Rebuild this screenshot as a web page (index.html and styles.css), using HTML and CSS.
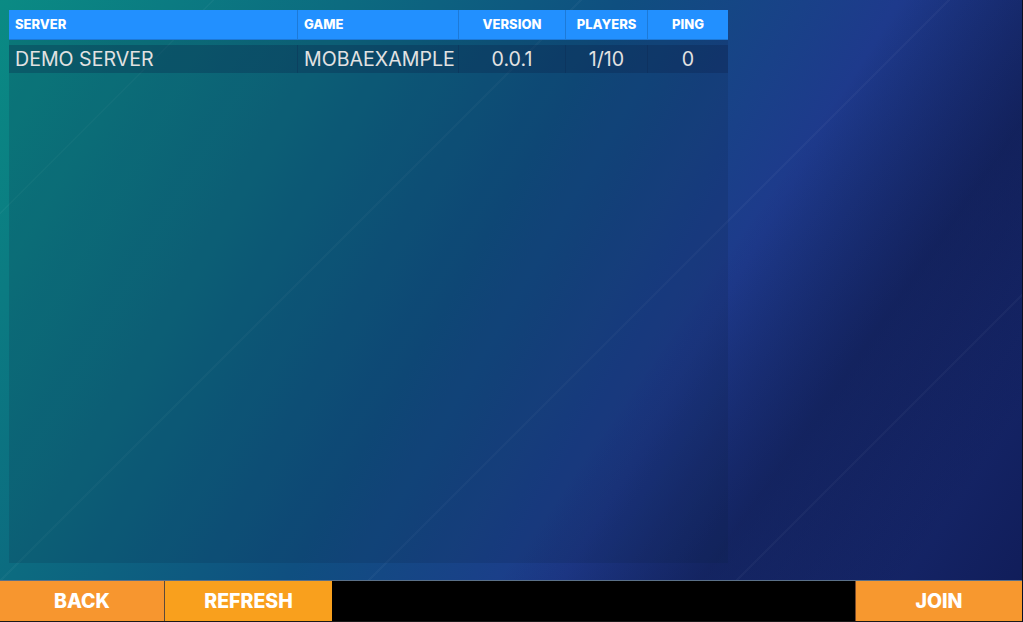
FILE: index.html
```html
<!DOCTYPE html>
<html>
<head>
<meta charset="utf-8">
<link rel="stylesheet" href="styles.css">
</head>
<body>
<div class="screen">
  <div class="main">
    <div class="panel">
      <div class="row head">
        <div class="cell c-server">SERVER</div>
        <div class="cell c-game">GAME</div>
        <div class="cell c-version center">VERSION</div>
        <div class="cell c-players center">PLAYERS</div>
        <div class="cell c-ping center">PING</div>
      </div>
      <div class="row item">
        <div class="cell c-server">DEMO SERVER</div>
        <div class="cell c-game">MOBAEXAMPLE</div>
        <div class="cell c-version center">0.0.1</div>
        <div class="cell c-players center">1/10</div>
        <div class="cell c-ping center">0</div>
      </div>
    </div>
  </div>
  <div class="bar">
    <button class="btn back">BACK</button>
    <button class="btn refresh">REFRESH</button>
    <div class="spacer"></div>
    <button class="btn join">JOIN</button>
  </div>
</div>
</body>
</html>
```
FILE: styles.css
```css
* { box-sizing: border-box; }
html, body { margin: 0; padding: 0; }
body {
  width: 1023px;
  height: 622px;
  overflow: hidden;
  font-family: "Inter", "Liberation Sans", sans-serif;
}
.screen {
  width: 1023px;
  height: 622px;
  display: flex;
  flex-direction: column;
  background:
    repeating-linear-gradient(135deg, rgba(255,255,255,0) 0 150px, rgba(255,255,255,0.03) 150px 152px, rgba(255,255,255,0) 152px 260px),
    linear-gradient(125deg, rgba(0,0,0,0) 0%, rgba(0,0,0,0) 62%, rgba(8,14,50,0.35) 76%, rgba(0,0,0,0) 90%),
    linear-gradient(120deg, #0a8b84 0%, #0c6b80 25%, #0f4f80 45%, #1e3a8c 65%, #17296e 82%, #101c58 100%);
  border-right: 1px solid #0a0f22;
}
.main {
  flex: 1;
  padding: 10px 0 0 9px;
}
.panel {
  width: 719px;
  height: 553px;
  background: rgba(10, 30, 60, 0.16);
}
.row {
  display: flex;
}
.head {
  height: 30px;
  background: #2290ff;
  border-bottom: 1px solid #1d78d6;
}
.head .cell {
  color: #ffffff;
  font-weight: 800;
  font-size: 13px;
  line-height: 29px;
  border-right: 1px solid #1d7ad8;
}
.item {
  margin-top: 5px;
  height: 28px;
  background: rgba(10, 30, 70, 0.28);
}
.item .cell {
  color: #e2e2e2;
  font-size: 19.6px;
  line-height: 29px;
  border-right: 1px solid rgba(10, 30, 70, 0.25);
}
.cell {
  padding-left: 6px;
  white-space: nowrap;
  overflow: hidden;
}
.cell.center { text-align: center; padding-left: 0; }
.c-server { width: 289px; }
.c-game { width: 161px; }
.c-version { width: 107px; }
.c-players { width: 82px; }
.c-ping { width: 80px; border-right: none !important; }
.bar {
  height: 42px;
  display: flex;
  background: #000;
  border-top: 1px solid #5a7088;
  border-bottom: 1px solid #1a1a1a;
}
.btn {
  border: none;
  margin: 0;
  padding: 0;
  font-family: "Inter", "Liberation Sans", sans-serif;
  font-weight: 800;
  font-size: 19.5px;
  color: #ffffff;
  cursor: pointer;
}
.back { width: 165px; background: #f7962f; border-right: 1px solid #5a4a3a; }
.refresh { width: 167px; background: #f9a01d; }
.spacer { flex: 1; }
.join { width: 167px; background: #f7982f; border-left: 1px solid #7a4a2a; }
```
